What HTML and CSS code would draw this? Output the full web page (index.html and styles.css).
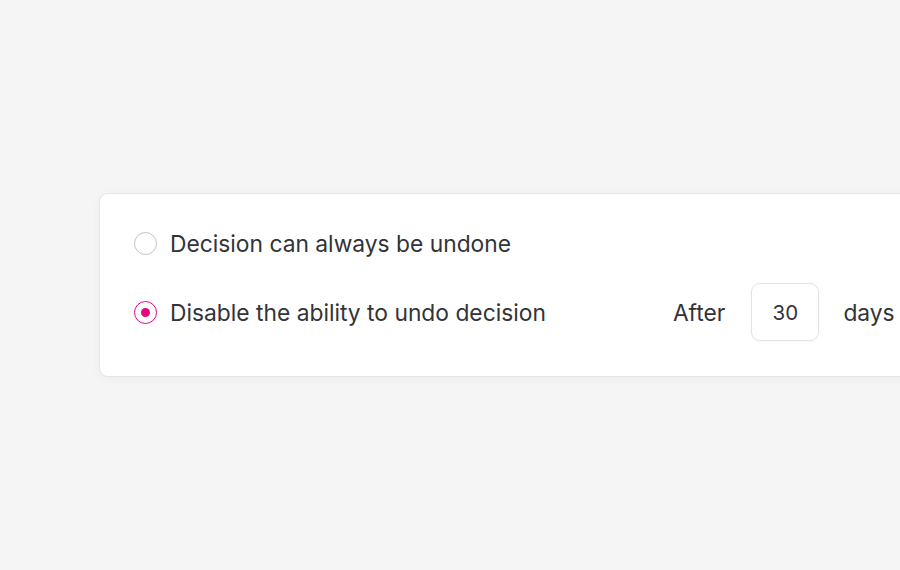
FILE: index.html
```html
<!DOCTYPE html>
<html>
<head>
<meta charset="utf-8">
<link rel="stylesheet" href="styles.css">
</head>
<body>
<div class="card">
  <div class="row row-first">
    <span class="radio"></span>
    <span class="label">Decision can always be undone</span>
  </div>
  <div class="row row-second">
    <span class="radio checked"></span>
    <span class="label">Disable the ability to undo decision</span>
    <span class="after">After</span>
    <span class="num">30</span>
    <span class="days">days</span>
  </div>
</div>
</body>
</html>
```
FILE: styles.css
```css
html, body {
  margin: 0;
  padding: 0;
  background: #f5f5f5;
  overflow: hidden;
  width: 900px;
  height: 570px;
}
body {
  font-family: Inter, "Liberation Sans", sans-serif;
  color: #333338;
  padding-top: 193px;
  padding-left: 99px;
  box-sizing: border-box;
}
.card {
  width: 830px;
  box-sizing: border-box;
  background: #ffffff;
  border: 1px solid #e6e6e6;
  border-radius: 9px;
  box-shadow: 0 2px 10px rgba(0,0,0,0.04);
  padding: 32px 0 35px 34px;
}
.row {
  display: flex;
  align-items: center;
}
.row-first {
  height: 34px;
  margin-bottom: 23px;
}
.row-second {
  height: 58px;
}
.radio {
  width: 21px;
  height: 21px;
  border: 1.5px solid #c3c3c9;
  border-radius: 50%;
  flex: none;
  position: relative;
  margin-right: 13px;
}
.radio.checked {
  border-color: #e5077f;
}
.radio.checked::after {
  content: "";
  position: absolute;
  left: 50%;
  top: 50%;
  width: 9px;
  height: 9px;
  margin: -4.5px 0 0 -4.5px;
  border-radius: 50%;
  background: #e5077f;
}
.label {
  font-size: 22.8px;
  font-weight: 400;
}
.after {
  font-size: 22.8px;
  margin-left: 127px;
}
.num {
  width: 66px;
  height: 56px;
  border: 1px solid #e3e3e3;
  border-radius: 9px;
  display: flex;
  align-items: center;
  justify-content: center;
  font-size: 20.5px;
  margin-left: 26px;
  box-shadow: 0 1px 3px rgba(0,0,0,0.04);
}
.days {
  font-size: 22.8px;
  margin-left: 24px;
}
```
